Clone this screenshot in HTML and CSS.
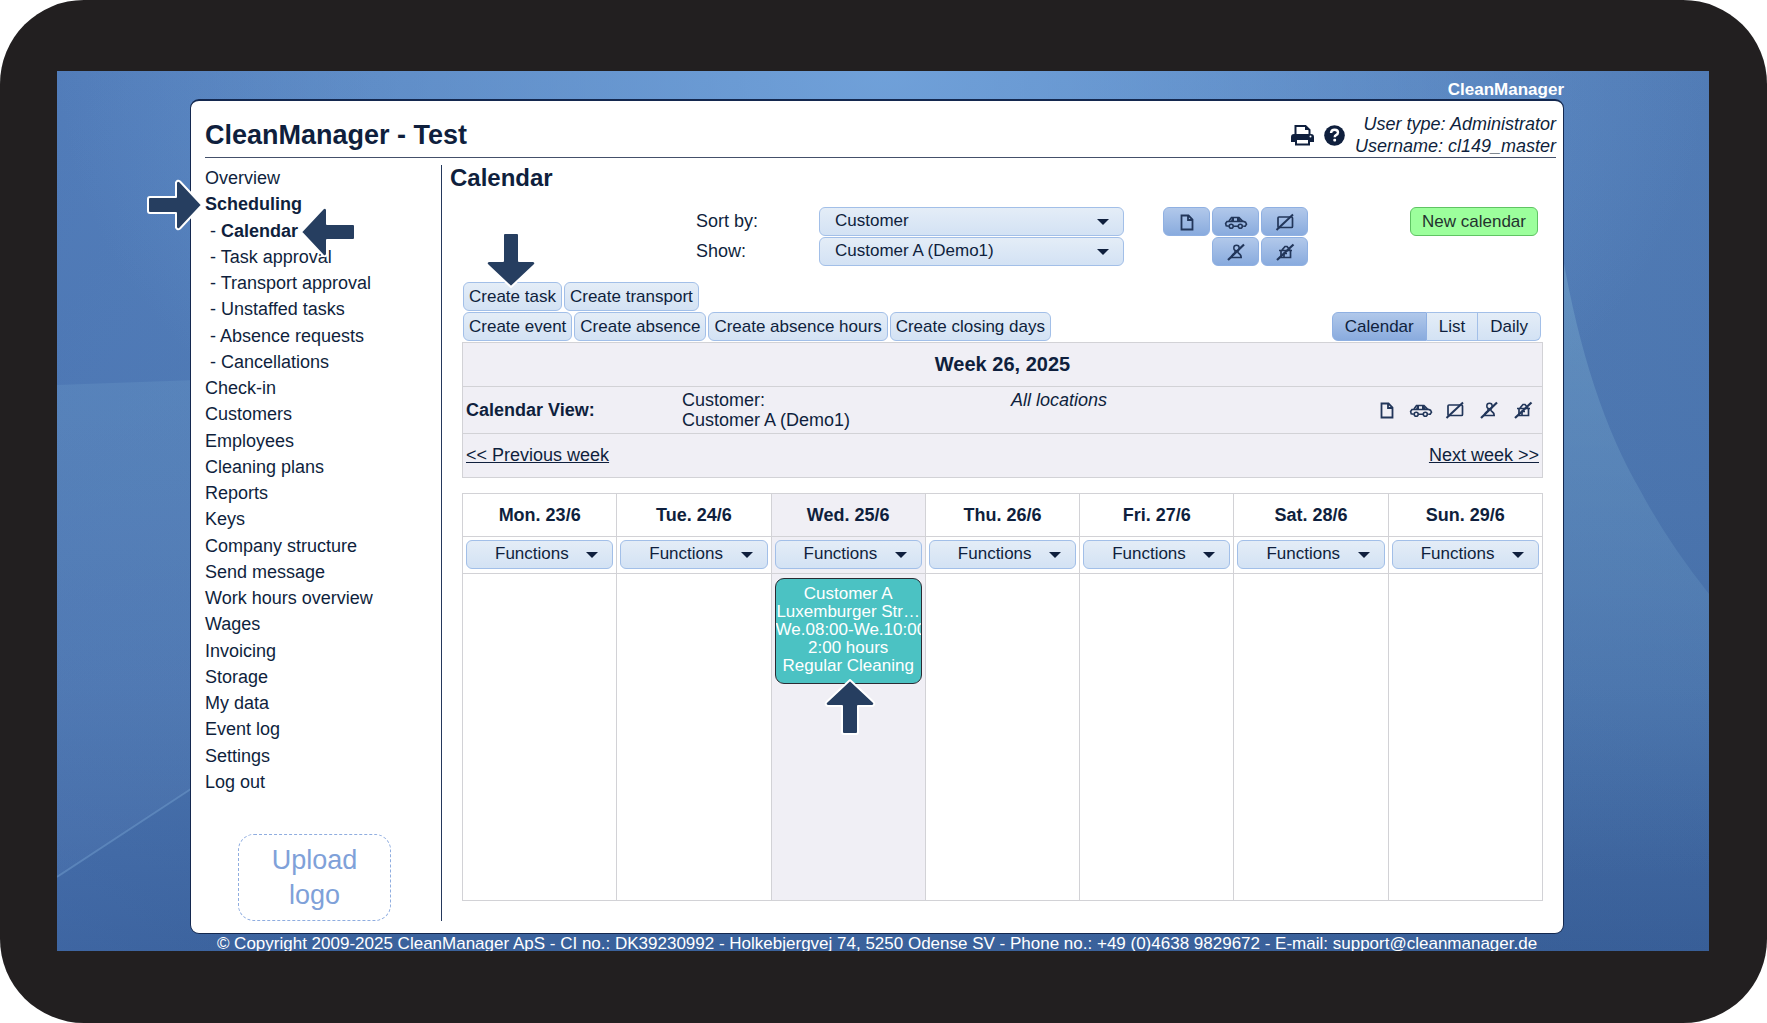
FILE: index.html
```html
<!DOCTYPE html>
<html lang="en">
<head>
    <meta charset="UTF-8">
    <meta name="viewport" content="width=device-width, initial-scale=1.0">
    <title>CleanManager - Calendar</title>
    <link rel="stylesheet" href="styles.css">
</head>
<body>

    <!-- Shared icons -->
    <svg class="sprite" aria-hidden="true">
        <symbol id="i-page" viewBox="0 0 24 18">
            <path d="M6.500 2.500h7l4 4v10h-11zM13 2.500v4.500h4.500" fill="none" stroke="currentColor" stroke-width="1.800"/>
        </symbol>
        <symbol id="i-car" viewBox="0 0 24 18">
            <path d="M5 8l2.500-3.500h7.500l3.500 3.500 3 1.200 1 2-1.300 2h-2M4.800 13.200L2.200 12.800 1.600 10.500 3 8.500h16M9.500 13.200h4.500M9 4.500v3.500M14 4.500v3.500" fill="none" stroke="currentColor" stroke-width="1.600"/>
            <path d="M8 5h2v3H7zM13 5h2l2 3h-4z" fill="currentColor"/>
            <circle cx="7.200" cy="13.200" r="2" fill="none" stroke="currentColor" stroke-width="1.600"/>
            <circle cx="16.300" cy="13.200" r="2" fill="none" stroke="currentColor" stroke-width="1.600"/>
        </symbol>
        <symbol id="i-noevent" viewBox="0 0 24 18">
            <rect x="5" y="4" width="14.500" height="10.500" rx="1" fill="none" stroke="currentColor" stroke-width="1.700"/>
            <path d="M3.500 17L20 1.500" stroke="currentColor" stroke-width="2" fill="none"/>
        </symbol>
        <symbol id="i-noperson" viewBox="0 0 24 18">
            <circle cx="12.500" cy="5" r="2.700" fill="none" stroke="currentColor" stroke-width="1.500"/>
            <path d="M10.500 8q1.500 1-.5 2.500-2.200 1.500-2.200 4h9.400q0-2.500-2.200-4-2-1.500-.5-2.500" fill="none" stroke="currentColor" stroke-width="1.600"/>
            <path d="M4 17L20 1.500" stroke="currentColor" stroke-width="2.200" fill="none"/>
        </symbol>
        <symbol id="i-nohouse" viewBox="0 0 24 18">
            <path d="M6 7.500h13M9 7l3-3.500h2L17 7M8 7.500v7h9.500V7.500M11 14v-3.500h3" fill="none" stroke="currentColor" stroke-width="1.700"/>
            <path d="M4 17L20.500 1.500" stroke="currentColor" stroke-width="2.200" fill="none"/>
        </symbol>
        <symbol id="i-arrow" viewBox="0 0 56 56">
            <path d="M3 20h26V5.500q1.500-3 4-1L55 28 33 51.500q-2.500 2-4-1V36H3q-2 0-2-2V22q0-2 2-2z" fill="#263e60" stroke="#fff" stroke-width="2" stroke-linejoin="round"/>
        </symbol>
    </svg>

    <div class="device">
        <div class="screen">
            <svg class="backdrop" viewBox="0 0 1652 880" preserveAspectRatio="none" aria-hidden="true">
                <defs>
                    <linearGradient id="beam" x1="0" y1="0" x2="0" y2="1">
                        <stop offset="0" stop-color="#7fb0d0" stop-opacity="0.45"/>
                        <stop offset="0.5" stop-color="#6f9fc8" stop-opacity="0.25"/>
                        <stop offset="0.9" stop-color="#5f8fc0" stop-opacity="0"/>
                    </linearGradient>
                    <linearGradient id="fold" x1="0" y1="0" x2="0" y2="1">
                        <stop offset="0" stop-color="#6c9bc8" stop-opacity="0.3"/>
                        <stop offset="1" stop-color="#6c8fc4" stop-opacity="0.12"/>
                    </linearGradient>
                </defs>
                <path d="M0 314L140 309V714L0 806z" fill="url(#fold)"/>
                <path d="M0 806L140 714" stroke="#6f9bcb" stroke-opacity="0.5" stroke-width="2"/>
                <path d="M1500 150Q1525 320 1583 419 1610 470 1652 523V880H1500z" fill="url(#beam)"/>
            </svg>

            <div class="brand">CleanManager</div>

            <div class="panel">
                <header class="header">
                    <h1>CleanManager - Test</h1>
                    <div class="header-tools">
                        <button type="button" class="tool" aria-label="Print">
                            <svg width="23" height="22" viewBox="0 0 23 22">
                                <path d="M4.500 11V2h10l4 4v5" fill="none" stroke="currentColor" stroke-width="2"/>
                                <path d="M14 1v5h5z" fill="currentColor"/>
                                <path d="M3 10h17q3 0 3 3v5h-4v-3H4v3H0v-5q0-3 3-3z" fill="currentColor"/>
                                <path d="M5 15h13v5.500H5z" fill="#fff" stroke="currentColor" stroke-width="2"/>
                                <circle cx="19.500" cy="12.500" r="1" fill="#fff"/>
                            </svg>
                        </button>
                        <button type="button" class="tool" aria-label="Help">
                            <svg width="21" height="21" viewBox="0 0 21 21">
                                <circle cx="10.500" cy="10.500" r="10.300" fill="currentColor"/>
                                <path d="M7 8q.3-3.300 3.600-3.300 3.400 0 3.400 2.800 0 1.600-2 2.600-1.300.7-1.300 2.200" fill="none" stroke="#fff" stroke-width="2.400"/>
                                <rect x="9.300" y="13.800" width="2.800" height="2.700" rx="1" fill="#fff"/>
                            </svg>
                        </button>
                        <div class="user">
                            <div>User type: Administrator</div>
                            <div>Username: cl149_master</div>
                        </div>
                    </div>
                </header>

                <div class="main">
                    <!-- Left menu -->
                    <nav class="sidebar">
                        <ul class="menu">
                            <li><a href="#">Overview</a></li>
                            <li class="current"><a href="#">Scheduling</a>
                                <svg class="arrow arrow-scheduling"><use href="#i-arrow"/></svg>
                            </li>
                            <li class="sub current">- <a href="#">Calendar</a>
                                <svg class="arrow arrow-calendar"><use href="#i-arrow"/></svg>
                            </li>
                            <li class="sub">- <a href="#">Task approval</a></li>
                            <li class="sub">- <a href="#">Transport approval</a></li>
                            <li class="sub">- <a href="#">Unstaffed tasks</a></li>
                            <li class="sub">- <a href="#">Absence requests</a></li>
                            <li class="sub">- <a href="#">Cancellations</a></li>
                            <li><a href="#">Check-in</a></li>
                            <li><a href="#">Customers</a></li>
                            <li><a href="#">Employees</a></li>
                            <li><a href="#">Cleaning plans</a></li>
                            <li><a href="#">Reports</a></li>
                            <li><a href="#">Keys</a></li>
                            <li><a href="#">Company structure</a></li>
                            <li><a href="#">Send message</a></li>
                            <li><a href="#">Work hours overview</a></li>
                            <li><a href="#">Wages</a></li>
                            <li><a href="#">Invoicing</a></li>
                            <li><a href="#">Storage</a></li>
                            <li><a href="#">My data</a></li>
                            <li><a href="#">Event log</a></li>
                            <li><a href="#">Settings</a></li>
                            <li><a href="#">Log out</a></li>
                        </ul>
                        <button type="button" class="upload">Upload logo</button>
                    </nav>

                    <main class="content">
                        <h2>Calendar</h2>

                        <div class="calendar-page">
                            <!-- Filters -->
                            <div class="filters">
                                <div class="filter-fields">
                                    <label for="sortBy">Sort by:</label>
                                    <div class="select">
                                        <select id="sortBy"><option>Customer</option></select>
                                    </div>
                                    <label for="show">Show:</label>
                                    <div class="select">
                                        <select id="show"><option>Customer A (Demo1)</option></select>
                                    </div>
                                </div>
                                <div class="toggles">
                                    <button type="button" class="btn active" aria-label="Tasks"><svg class="icon"><use href="#i-page"/></svg></button>
                                    <button type="button" class="btn active" aria-label="Transport"><svg class="icon"><use href="#i-car"/></svg></button>
                                    <button type="button" class="btn active" aria-label="Events"><svg class="icon"><use href="#i-noevent"/></svg></button>
                                    <button type="button" class="btn active second" aria-label="Absence"><svg class="icon"><use href="#i-noperson"/></svg></button>
                                    <button type="button" class="btn active" aria-label="Closing days"><svg class="icon"><use href="#i-nohouse"/></svg></button>
                                </div>
                                <button type="button" class="btn btn-new">New calendar</button>
                            </div>

                            <!-- Create buttons -->
                            <div class="actions">
                                <div class="action-row">
                                    <button type="button" class="btn">Create task</button>
                                    <button type="button" class="btn">Create transport</button>
                                    <svg class="arrow arrow-create"><use href="#i-arrow"/></svg>
                                </div>
                                <div class="action-row">
                                    <button type="button" class="btn">Create event</button>
                                    <button type="button" class="btn">Create absence</button>
                                    <button type="button" class="btn">Create absence hours</button>
                                    <button type="button" class="btn">Create closing days</button>
                                    <div class="tabs">
                                        <button type="button" class="btn active">Calendar</button>
                                        <button type="button" class="btn">List</button>
                                        <button type="button" class="btn">Daily</button>
                                    </div>
                                </div>
                            </div>

                            <!-- Week info -->
                            <section class="week">
                                <h3>Week 26, 2025</h3>
                                <div class="week-view">
                                    <strong>Calendar View:</strong>
                                    <div class="week-text">Customer:<br>Customer A (Demo1)</div>
                                    <div class="week-text"><em>All locations</em></div>
                                    <div class="week-icons">
                                        <svg class="icon"><use href="#i-page"/></svg>
                                        <svg class="icon"><use href="#i-car"/></svg>
                                        <svg class="icon"><use href="#i-noevent"/></svg>
                                        <svg class="icon"><use href="#i-noperson"/></svg>
                                        <svg class="icon"><use href="#i-nohouse"/></svg>
                                    </div>
                                </div>
                                <div class="week-nav">
                                    <a href="#">&lt;&lt; Previous week</a>
                                    <a href="#">Next week &gt;&gt;</a>
                                </div>
                            </section>

                            <table class="days">
                                <thead>
                                    <tr>
                                        <th>Mon. 23/6</th>
                                        <th>Tue. 24/6</th>
                                        <th class="today">Wed. 25/6</th>
                                        <th>Thu. 26/6</th>
                                        <th>Fri. 27/6</th>
                                        <th>Sat. 28/6</th>
                                        <th>Sun. 29/6</th>
                                    </tr>
                                </thead>
                                <tbody>
                                    <tr class="functions">
                                        <td><div class="select"><select aria-label="Functions Monday"><option>Functions</option></select></div></td>
                                        <td><div class="select"><select aria-label="Functions Tuesday"><option>Functions</option></select></div></td>
                                        <td class="today"><div class="select"><select aria-label="Functions Wednesday"><option>Functions</option></select></div></td>
                                        <td><div class="select"><select aria-label="Functions Thursday"><option>Functions</option></select></div></td>
                                        <td><div class="select"><select aria-label="Functions Friday"><option>Functions</option></select></div></td>
                                        <td><div class="select"><select aria-label="Functions Saturday"><option>Functions</option></select></div></td>
                                        <td><div class="select"><select aria-label="Functions Sunday"><option>Functions</option></select></div></td>
                                    </tr>
                                    <tr class="slots">
                                        <td></td>
                                        <td></td>
                                        <td class="today">
                                            <div class="slot">
                                                <div class="event">
                                                    <div>Customer A</div>
                                                    <div>Luxemburger Str…</div>
                                                    <div>We.08:00-We.10:00</div>
                                                    <div>2:00 hours</div>
                                                    <div>Regular Cleaning</div>
                                                </div>
                                                <svg class="arrow arrow-event"><use href="#i-arrow"/></svg>
                                            </div>
                                        </td>
                                        <td></td>
                                        <td></td>
                                        <td></td>
                                        <td></td>
                                    </tr>
                                </tbody>
                            </table>
                        </div>
                    </main>
                </div>
            </div>

            <footer class="footer">© Copyright 2009-2025 CleanManager ApS - CI no.: DK39230992 - Holkebjergvej 74, 5250 Odense SV - Phone no.: +49 (0)4638 9829672 - E-mail: support@cleanmanager.de</footer>
        </div>
    </div>

</body>
</html>
```
FILE: styles.css
```css
* {
    margin: 0;
    padding: 0;
    box-sizing: border-box;
}

:root {
    --navy: #0f1f3d;
    --line: #d2d2d6;
    --grey: #f0eff5;
    --blue-border: #a2bfe8;
    --font: 18px;
    --font-button: 17px;
    --radius: 6px;
}

body {
    font-family: "Liberation Sans", Arial, sans-serif;
    font-size: var(--font);
    line-height: 23px;
    color: var(--navy);
    background: #fff;
}

a {
    color: inherit;
    text-decoration: none;
}

button, select {
    font-family: inherit;
    font-size: var(--font-button);
    color: inherit;
    cursor: pointer;
}

.sprite {
    display: none;
}

/* Tablet frame */
.device {
    display: flex;
    min-height: 100vh;
    padding: 71px 58px 72px 57px;
    background: #221f20;
    border-radius: 84px;
}

.screen {
    position: relative;
    isolation: isolate;
    flex: 1;
    display: flex;
    flex-direction: column;
    padding: 0 145px 0 133px;
    overflow: hidden;
    background:
        radial-gradient(ellipse 50% 60% at 50% 0, rgba(118, 168, 224, 0.8), rgba(118, 168, 224, 0)),
        linear-gradient(to right, rgba(72, 112, 178, 0.3), rgba(40, 70, 120, 0) 20%, rgba(40, 70, 120, 0) 60%, rgba(40, 70, 120, 0.1)),
        linear-gradient(#5682bd, #4e79b3 50%, #4a74ae 70%, #3a619b);
}

.backdrop {
    position: absolute;
    inset: 0;
    z-index: -1;
    width: 100%;
    height: 100%;
}

.brand {
    height: 28px;
    padding-top: 7px;
    text-align: right;
    font-size: 17px;
    font-weight: bold;
    color: #fff;
}

.panel {
    flex: 1;
    display: flex;
    flex-direction: column;
    padding: 0 7px 12px 14px;
    background: #fff;
    border: 1px solid #14284f;
    border-top-width: 2px;
    border-radius: 9px;
}

.footer {
    height: 17px;
    line-height: 20px;
    overflow: hidden;
    text-align: center;
    white-space: nowrap;
    font-size: 17px;
    color: #fff;
}

/* Header */
.header {
    display: flex;
    justify-content: space-between;
    align-items: center;
    height: 57px;
    padding-top: 12px;
    border-bottom: 1px solid #44506a;
}

h1 {
    font-size: 27px;
    line-height: 30px;
}

.header-tools {
    display: flex;
    align-items: center;
    gap: 10px;
}

.tool {
    display: flex;
    background: none;
    border: none;
}

.user {
    line-height: 22px;
    font-style: italic;
    text-align: right;
}

.main {
    flex: 1;
    display: flex;
    padding-top: 7px;
}

/* Sidebar */
.sidebar {
    display: flex;
    flex-direction: column;
    width: 237px;
    border-right: 1px solid #24385c;
}

.menu {
    flex: 1;
    display: flex;
    flex-direction: column;
    justify-content: space-between;
    list-style: none;
}

.menu li {
    position: relative;
    line-height: 26px;
}

.menu .sub {
    padding-left: 5px;
}

.menu .current a {
    font-weight: bold;
}

.upload {
    width: 153px;
    height: 87px;
    margin: 39px 0 0 33px;
    padding: 0 24px;
    font-size: 27px;
    line-height: 35px;
    color: #7fa1d9;
    background: none;
    border: 1px dashed #8fade0;
    border-radius: 16px;
}

/* Callout arrows */
.arrow {
    position: absolute;
    z-index: 2;
    width: 56px;
    height: 56px;
}

.arrow-scheduling {
    top: -14px;
    left: -58px;
}

.arrow-calendar {
    top: -14px;
    left: 95px;
    transform: rotate(180deg);
}

.arrow-create {
    top: -50px;
    left: 20px;
    transform: rotate(90deg);
}

.arrow-event {
    top: 105px;
    left: 50px;
    transform: rotate(-90deg);
}

/* Content */
.content {
    flex: 1;
}

h2 {
    padding-left: 8px;
    font-size: 24px;
    line-height: 26px;
}

.calendar-page {
    padding: 16px 13px 0 20px;
}

.btn {
    height: 29px;
    padding: 0 5px;
    line-height: 24px;
    background: linear-gradient(#e4edf7, #d3e2f4);
    border: 1px solid var(--blue-border);
    border-radius: var(--radius);
    white-space: nowrap;
}

.btn.active {
    background: linear-gradient(#b1c8ea, #89abde);
    border-color: #8fb0e2;
}

.icon {
    display: block;
    width: 24px;
    height: 18px;
    color: #22365a;
}

.select {
    position: relative;
}

.select::after {
    content: "";
    position: absolute;
    top: 12px;
    right: 15px;
    border: 6px solid transparent;
    border-top-color: var(--navy);
    border-bottom: none;
    pointer-events: none;
}

.select select {
    display: block;
    appearance: none;
    width: 100%;
    height: 29px;
    padding: 0 36px 2px 15px;
    background: linear-gradient(#e4edf7, #d3e2f4);
    border: 1px solid var(--blue-border);
    border-radius: var(--radius);
}

/* Filters */
.filters {
    display: flex;
    align-items: flex-start;
    gap: 39px;
    padding-left: 234px;
}

.filter-fields {
    display: grid;
    grid-template-columns: 123px 305px;
    row-gap: 1px;
}

.filter-fields label {
    line-height: 28px;
}

.toggles {
    display: grid;
    grid-template-columns: repeat(3, 47px);
    gap: 1px 2px;
}

.toggles .btn {
    display: flex;
    align-items: center;
    justify-content: center;
}

.toggles .second {
    grid-column: 2;
}

.btn-new {
    margin-left: auto;
    margin-right: 5px;
    padding: 0 11px;
    color: #24322f;
    background: #9cff9c;
    border-color: #5fc463;
}

/* Create buttons */
.actions {
    margin-top: 16px;
}

.action-row {
    position: relative;
    display: flex;
    gap: 2px;
    margin: 0 2px 1px 1px;
}

.tabs {
    display: flex;
    margin-left: auto;
}

.tabs .btn {
    padding: 0 12px;
    border-radius: 0;
}

.tabs .btn + .btn {
    border-left: none;
}

.tabs .btn:first-child {
    border-radius: var(--radius) 0 0 var(--radius);
}

.tabs .btn:last-child {
    border-radius: 0 var(--radius) var(--radius) 0;
}

/* Week info */
.week {
    background: var(--grey);
    border: 1px solid var(--line);
}

.week h3 {
    text-align: center;
    font-size: 20px;
    line-height: 43px;
}

.week-view {
    display: grid;
    grid-template-columns: 216px 329px 1fr auto;
    align-items: center;
    height: 48px;
    padding: 0 7px 0 3px;
    border: 1px solid var(--line);
    border-width: 1px 0;
}

.week-text {
    align-self: start;
    padding-top: 3px;
    line-height: 20px;
}

.week-icons {
    display: flex;
    gap: 10px;
}

.week-nav {
    display: flex;
    justify-content: space-between;
    padding: 0 3px;
    line-height: 43px;
}

.week-nav a {
    text-decoration: underline;
}

/* Days */
.days {
    width: 100%;
    margin-top: 15px;
    table-layout: fixed;
    border-collapse: collapse;
}

.days th, .days td {
    border: 1px solid var(--line);
    vertical-align: top;
}

.days th {
    height: 43px;
    vertical-align: middle;
}

.days .today {
    background: var(--grey);
}

.functions td {
    height: 37px;
    padding: 3px 3px 0;
}

.functions select {
    padding-left: 28px;
}

.slots td {
    height: 327px;
}

.slot {
    position: relative;
    padding: 4px 3px;
}

.event {
    height: 106px;
    padding-top: 6px;
    overflow: hidden;
    font-size: 17px;
    line-height: 18px;
    text-align: center;
    white-space: nowrap;
    color: #fff;
    background: #4bc2c3;
    border: 1px solid #2b2b33;
    border-radius: 9px;
}
```
